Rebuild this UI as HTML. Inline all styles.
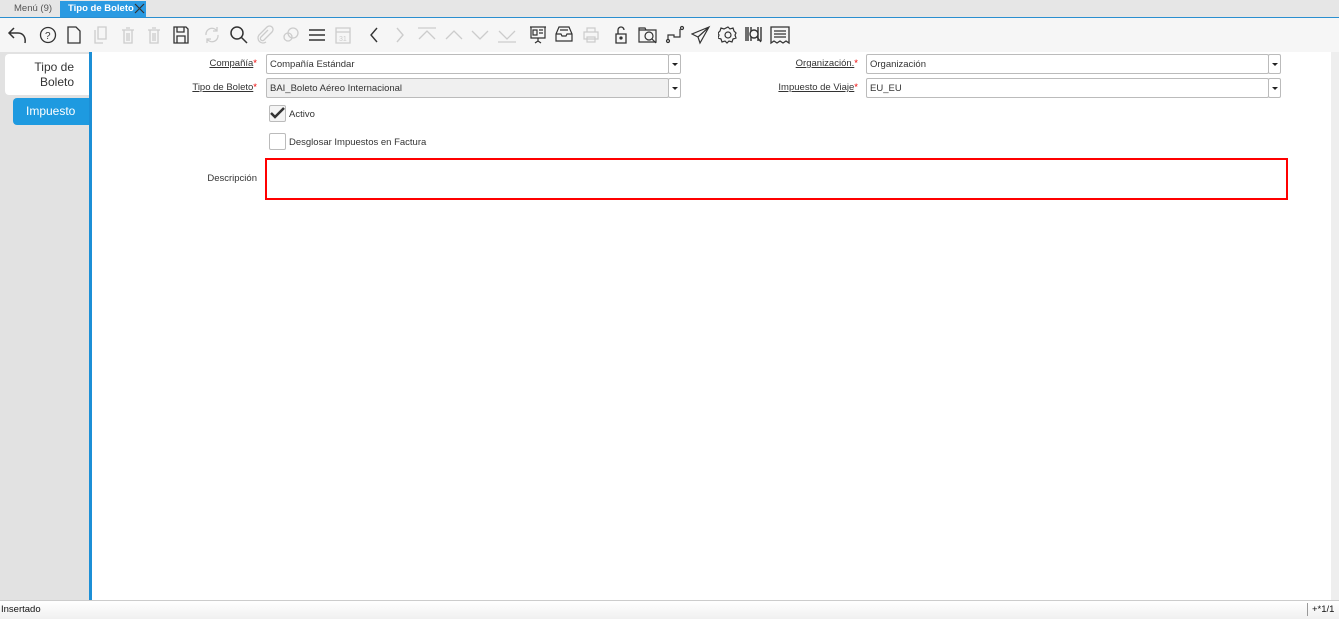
<!DOCTYPE html>
<html><head><meta charset="utf-8"><style>
*{box-sizing:border-box;margin:0;padding:0}
body{width:1339px;height:619px;overflow:hidden;background:#fff;font-family:"Liberation Sans",sans-serif;font-size:10px;color:#333;position:relative}
.abs{position:absolute}
.tabbar{left:0;top:0;width:1339px;height:18px;background:#e6e6e6;border-bottom:1px solid #2a8fd0}
.tab{top:1px;height:16px;font-size:9.5px;line-height:16px;padding-left:8px}
.tb{left:0;top:18px;width:1339px;height:34px;background:#f6f6f6}
.tb svg{position:absolute;top:7px}
.left{left:0;top:52px;width:92px;height:548px;background:#e2e2e2;border-right:3px solid #1c8fd6}
.lab{font-size:9.5px;text-align:right;width:180px}
.lab u{color:#333}
.req{color:#e00}
.inp{height:20px;border:1px solid #bbb;border-radius:2px;font-size:9.5px;line-height:19px;padding-left:3px;background:#fff}
.dd{width:13px;height:20px;border:1px solid #bbb;border-radius:2px;background:#fff}
.dd:after{content:"";position:absolute;left:3px;top:8px;border:3px solid transparent;border-top:3px solid #222}
.cb{width:17px;height:17px;border:1px solid #bbb;background:#f4f4f4;border-radius:2px}
</style></head><body>
<div class="abs tabbar"></div>
<div class="abs tab" style="left:6px;width:52px;background:#e6e6e6;color:#555">Menú (9)</div>
<div class="abs tab" style="left:60px;width:86px;background:#2a9ae2;color:#fff;font-weight:bold">Tipo de Boleto</div>
<svg class="abs" style="left:134px;top:3px" width="11" height="11"><path d="M1 1l9 9M10 1l-9 9" stroke="#333" stroke-width="1.2"/></svg>
<div class="abs tb">
<svg style="left:6px" width="22" height="20" viewBox="0 0 22 20" fill="none" stroke="#333" stroke-width="1.5"><path d="M8 3L3 8l5 5M3 8h9c5 0 8 4 7 10"/></svg>
<svg style="left:39px" width="20" height="20" viewBox="0 0 20 20" fill="none" stroke="#333" stroke-width="1.3"><circle cx="9" cy="10" r="7.5"/><text x="6" y="14" font-size="10" fill="#333" stroke="none">?</text></svg>
<svg style="left:66px" width="16" height="20" viewBox="0 0 16 20" fill="none" stroke="#333" stroke-width="1.3"><path d="M2 2h8l4 4v12H2z"/></svg>
<svg style="left:93px" width="16" height="20" viewBox="0 0 16 20" fill="none" stroke="#ccc" stroke-width="1.3"><path d="M5 2h8v12H5zM2 5v13h8"/></svg>
<svg style="left:120px" width="16" height="20" viewBox="0 0 16 20" fill="none" stroke="#ccc" stroke-width="1.3"><path d="M2 5h12M4 5v13h8V5M6 3h4M7 8v8M9 8v8"/></svg>
<svg style="left:146px" width="16" height="20" viewBox="0 0 16 20" fill="none" stroke="#ccc" stroke-width="1.3"><path d="M2 5h12M4 5v13h8V5M6 3h4M7 8v8M9 8v8"/></svg>
<svg style="left:172px" width="18" height="20" viewBox="0 0 18 20" fill="none" stroke="#333" stroke-width="1.3"><path d="M2 2h12l2 2v14H2zM5 2v5h7V2M5 11h8v7H5z"/></svg>
<svg style="left:203px" width="18" height="20" viewBox="0 0 18 20" fill="none" stroke="#ccc" stroke-width="1.3"><path d="M3 10a6 6 0 0 1 11-4M15 10a6 6 0 0 1-11 4M14 2v4h-4M4 18v-4h4"/></svg>
<svg style="left:229px" width="20" height="20" viewBox="0 0 20 20" fill="none" stroke="#333" stroke-width="1.5"><circle cx="8" cy="8" r="6"/><path d="M12.5 12.5L18 18"/></svg>
<svg style="left:256px" width="18" height="20" viewBox="0 0 18 20" fill="none" stroke="#ccc" stroke-width="1.3"><path d="M12 5L5 12a2 2 0 0 0 3 3l8-8a3.5 3.5 0 0 0-5-5L3 10a5 5 0 0 0 7 7"/></svg>
<svg style="left:282px" width="18" height="20" viewBox="0 0 18 20" fill="none" stroke="#ccc" stroke-width="1.3"><circle cx="11" cy="8" r="5"/><circle cx="6" cy="12" r="4"/></svg>
<svg style="left:307px" width="20" height="20" viewBox="0 0 20 20" fill="none" stroke="#333" stroke-width="1.6"><path d="M2 5h16M2 10h16M2 15h16"/></svg>
<svg style="left:334px" width="18" height="20" viewBox="0 0 18 20" fill="none" stroke="#ccc" stroke-width="1.3"><path d="M2 3h14v15H2zM2 7h14"/><text x="5" y="16" font-size="7" fill="#ccc" stroke="none">31</text></svg>
<svg style="left:368px" width="12" height="20" viewBox="0 0 12 20" fill="none" stroke="#333" stroke-width="1.4"><path d="M9 3L3 10l6 7"/></svg>
<svg style="left:394px" width="12" height="20" viewBox="0 0 12 20" fill="none" stroke="#ccc" stroke-width="1.4"><path d="M3 3l6 7-6 7"/></svg>
<svg style="left:416px" width="22" height="20" viewBox="0 0 22 20" fill="none" stroke="#ccc" stroke-width="1.3"><path d="M2 3h18M3 14l8-8 8 8"/></svg>
<svg style="left:443px" width="22" height="20" viewBox="0 0 22 20" fill="none" stroke="#ccc" stroke-width="1.3"><path d="M3 14l8-8 8 8"/></svg>
<svg style="left:469px" width="22" height="20" viewBox="0 0 22 20" fill="none" stroke="#ccc" stroke-width="1.3"><path d="M3 6l8 8 8-8"/></svg>
<svg style="left:496px" width="22" height="20" viewBox="0 0 22 20" fill="none" stroke="#ccc" stroke-width="1.3"><path d="M3 6l8 8 8-8M2 17h18"/></svg>
<svg style="left:529px" width="18" height="20" viewBox="0 0 18 20" fill="none" stroke="#333" stroke-width="1.2"><path d="M1 2h16M2 2v11h14V2M9 13v3M6 18l3-2 3 2M4 5h4v5H4zM10 5h4M10 8h4"/></svg>
<svg style="left:555px" width="18" height="20" viewBox="0 0 18 20" fill="none" stroke="#333" stroke-width="1.2"><path d="M4 2h10l3 7v7H1V9zM1 9h5l1 2h4l1-2h5M5 5h8"/></svg>
<svg style="left:582px" width="18" height="20" viewBox="0 0 18 20" fill="none" stroke="#ccc" stroke-width="1.2"><path d="M5 7V3h8v4M2 7h14v7H2zM5 12h8v5H5z"/></svg>
<svg style="left:613px" width="16" height="20" viewBox="0 0 16 20" fill="none" stroke="#333" stroke-width="1.3"><path d="M3 9h10v9H3zM5 9V5a3 3 0 0 1 6 0"/><circle cx="8" cy="13" r="1" fill="#333"/></svg>
<svg style="left:638px" width="20" height="20" viewBox="0 0 20 20" fill="none" stroke="#333" stroke-width="1.2"><path d="M1 17V3h6l1 2h10v12H1zM1 5h7"/><circle cx="11" cy="11" r="4"/><path d="M14 14l4 4"/></svg>
<svg style="left:665px" width="20" height="20" viewBox="0 0 20 20" fill="none" stroke="#333" stroke-width="1.2"><circle cx="3" cy="16" r="1.5"/><circle cx="17" cy="3" r="1.5"/><path d="M3 15V10h6v2h6V4"/></svg>
<svg style="left:691px" width="20" height="20" viewBox="0 0 20 20" fill="none" stroke="#333" stroke-width="1.2"><path d="M18 2L1 9l6 3 2 6zM7 12L18 2"/></svg>
<svg style="left:718px" width="20" height="20" viewBox="0 0 20 20" fill="none" stroke="#333" stroke-width="1.2"><circle cx="10" cy="10" r="3"/><path d="M10 2l2 2 3-1 1 3 2 2-1 2 1 3-3 1-1 3-3-1-2 2-2-2-3 1-1-3-3-1 1-3-1-2 2-2 1-3 3 1z"/></svg>
<svg style="left:744px" width="20" height="20" viewBox="0 0 20 20" fill="none" stroke="#333" stroke-width="1.4"><path d="M2 2v14M4 2v14M7 2v14M14 2v14M17 2v14"/><circle cx="10" cy="9" r="4" fill="#f6f6f6"/><path d="M13 12l4 5"/></svg>
<svg style="left:770px" width="20" height="20" viewBox="0 0 20 20" fill="none" stroke="#333" stroke-width="1.3"><path d="M1 2h18v16l-3-2-3 2-3-2-3 2-3-2-3 2zM4 6h12M4 9h12M4 12h12"/></svg>
</div>
<div class="abs left"></div>
<div class="abs" style="left:5px;top:54px;width:84px;height:41px;background:#fff;border-radius:4px 0 0 4px;font-size:12px;text-align:right;padding:6px 15px 0 0;line-height:15px;color:#333">Tipo de<br>Boleto</div>
<div class="abs" style="left:13px;top:98px;width:76px;height:27px;background:#1e9ae0;border-radius:4px 0 0 4px;font-size:12px;color:#fff;line-height:26px;padding-left:13px">Impuesto</div>
<div class="abs" style="left:1331px;top:52px;width:8px;height:548px;background:#eee"></div>

<div class="abs lab" style="left:77px;top:58px"><u>Compañía</u><span class="req">*</span></div>
<div class="abs inp" style="left:266px;top:54px;width:403px">Compañía Estándar</div><div class="abs dd" style="left:668px;top:54px"></div>
<div class="abs lab" style="left:77px;top:82px"><u>Tipo de Boleto</u><span class="req">*</span></div>
<div class="abs inp" style="left:266px;top:78px;width:403px;background:#f0f0f0">BAI_Boleto Aéreo Internacional</div><div class="abs dd" style="left:668px;top:78px"></div>
<div class="abs lab" style="left:678px;top:58px"><u>Organización.</u><span class="req">*</span></div>
<div class="abs inp" style="left:866px;top:54px;width:403px">Organización</div><div class="abs dd" style="left:1268px;top:54px"></div>
<div class="abs lab" style="left:678px;top:82px"><u>Impuesto de Viaje</u><span class="req">*</span></div>
<div class="abs inp" style="left:866px;top:78px;width:403px">EU_EU</div><div class="abs dd" style="left:1268px;top:78px"></div>

<div class="abs cb" style="left:269px;top:105px"><svg width="17" height="17" style="position:absolute;left:-1px;top:-1px"><path d="M2 8l4 4 9-9" fill="none" stroke="#333" stroke-width="2.5"/></svg></div>
<div class="abs" style="left:289px;top:109px;font-size:9.5px">Activo</div>
<div class="abs cb" style="left:269px;top:133px;background:#fff"></div>
<div class="abs" style="left:289px;top:137px;font-size:9.5px">Desglosar Impuestos en Factura</div>
<div class="abs lab" style="left:77px;top:173px">Descripción</div>
<div class="abs" style="left:265px;top:158px;width:1023px;height:42px;border:2px solid #f00"></div>

<div class="abs" style="left:0;top:600px;width:1339px;height:19px;border-top:1px solid #ccc;background:linear-gradient(#fff,#f0f0f0)"></div>
<div class="abs" style="left:1px;top:604px;font-size:9.5px;color:#111">Insertado</div>
<div class="abs" style="left:1307px;top:603px;height:13px;border-left:1px solid #999"></div>
<div class="abs" style="left:1312px;top:604px;font-size:9.5px;color:#111">+*1/1</div>
</body></html>
